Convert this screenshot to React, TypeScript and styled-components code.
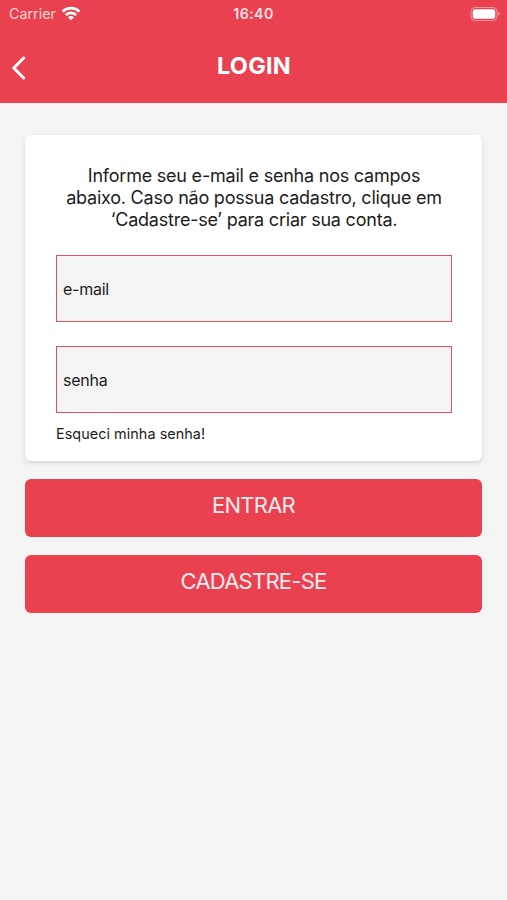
import React from "react";
import styled, { createGlobalStyle } from "styled-components";

const Global = createGlobalStyle`
  * { box-sizing: border-box; }
  body { margin: 0; background: #f4f4f4; font-family: Inter, "Liberation Sans", sans-serif; }
`;
const Screen = styled.div`
  height: 900px;
  background: #f4f4f4;
  overflow: hidden;
`;
const Header = styled.header`
  height: 103px;
  background: #ea4150;
  color: #fff;
`;
const StatusBar = styled.div`
  height: 27px;
  display: grid;
  grid-template-columns: 1fr auto 1fr;
  align-items: center;
  padding: 0 6px;
`;
const Carrier = styled.div`
  display: flex;
  align-items: center;
  gap: 5px;
  padding-left: 3px;
  font-size: 14.3px;
  color: #fbd5d9;
`;
const Clock = styled.div`
  font-size: 14.2px;
  font-weight: 600;
  letter-spacing: 0.4px;
  color: #fbe2e4;
`;
const Battery = styled.svg`
  justify-self: end;
`;
const NavBar = styled.div`
  height: 76px;
  display: grid;
  grid-template-columns: 40px 1fr 40px;
  align-items: center;
`;
const Back = styled.button`
  border: 0;
  background: none;
  padding: 5px 0 0 11px;
  display: flex;
`;
const Title = styled.h1`
  margin: 0;
  padding-left: 1px;
  font-size: 23.5px;
  font-weight: 700;
  letter-spacing: 0.2px;
  text-align: center;
`;
const Body = styled.main`
  padding: 32px 25px 0;
  display: flex;
  flex-direction: column;
  gap: 18px;
`;
const Card = styled.section`
  height: 326px;
  background: #fff;
  border-radius: 6px;
  padding: 30px 30px 0 31px;
  box-shadow: 0 2px 4px rgba(0, 0, 0, 0.13);
`;
const Intro = styled.p`
  margin: 0 0 24px;
  font-size: 18px;
  line-height: 22px;
  letter-spacing: -0.22px;
  text-align: center;
  white-space: nowrap;
  color: #1c1c1c;
`;
const Field = styled.input`
  display: block;
  width: 100%;
  height: 67px;
  margin-bottom: 24px;
  padding: 0 6px;
  border: 1px solid #e0525f;
  border-radius: 0;
  background: #f4f4f4;
  font: 16px Inter, sans-serif;
  letter-spacing: -0.25px;
  color: #1c1c1c;
  &::placeholder { color: #1c1c1c; opacity: 1; }
`;
const Forgot = styled.a`
  display: block;
  margin-top: -13px;
  font-size: 14.4px;
  line-height: 20px;
  letter-spacing: 0.05px;
  color: #1c1c1c;
`;
const Button = styled.button`
  height: 58px;
  border: 0;
  border-radius: 6px;
  background: #ea4150;
  color: #fdecee;
  font: 22px Inter, sans-serif;
  letter-spacing: -0.75px;
  padding: 0 0 6px;
`;

export default function App() {
  return (
    <Screen>
      <Global />
      <Header>
        <StatusBar>
          <Carrier>
            Carrier
            <svg width="20" height="15" viewBox="0 0 20 15" fill="none" stroke="#fff" strokeWidth="2.8">
              <path d="M1.6 5.5a11.9 11.9 0 0 1 16.8 0" />
              <path d="M4.8 9a7.4 7.4 0 0 1 10.4 0" />
              <path d="M10 14.2 7 11.2a4.2 4.2 0 0 1 6 0z" fill="#fff" stroke="none" />
            </svg>
          </Carrier>
          <Clock>16:40</Clock>
          <Battery width="31" height="14" viewBox="0 0 31 14">
            <rect x="1" y=".5" width="26" height="13" rx="4" fill="none" stroke="#f4949d" />
            <rect x="2.8" y="2.3" width="22.4" height="9.4" rx="2" fill="#fff" />
            <path d="M28.4 4.8q2.8 2.2 0 4.4z" fill="#f4949d" />
          </Battery>
        </StatusBar>
        <NavBar>
          <Back aria-label="Voltar">
            <svg width="15" height="24" viewBox="0 0 15 24" fill="none" stroke="#fff" strokeWidth="3" strokeLinecap="round" strokeLinejoin="round">
              <path d="M12.7 2 2.8 12l9.9 10" />
            </svg>
          </Back>
          <Title>LOGIN</Title>
        </NavBar>
      </Header>
      <Body>
        <Card>
          <Intro>
            Informe seu e-mail e senha nos campos<br />
            abaixo. Caso não possua cadastro, clique em<br />
            ‘Cadastre-se’ para criar sua conta.
          </Intro>
          <Field type="email" placeholder="e-mail" />
          <Field type="password" placeholder="senha" />
          <Forgot>Esqueci minha senha!</Forgot>
        </Card>
        <Button>ENTRAR</Button>
        <Button>CADASTRE-SE</Button>
      </Body>
    </Screen>
  );
}
